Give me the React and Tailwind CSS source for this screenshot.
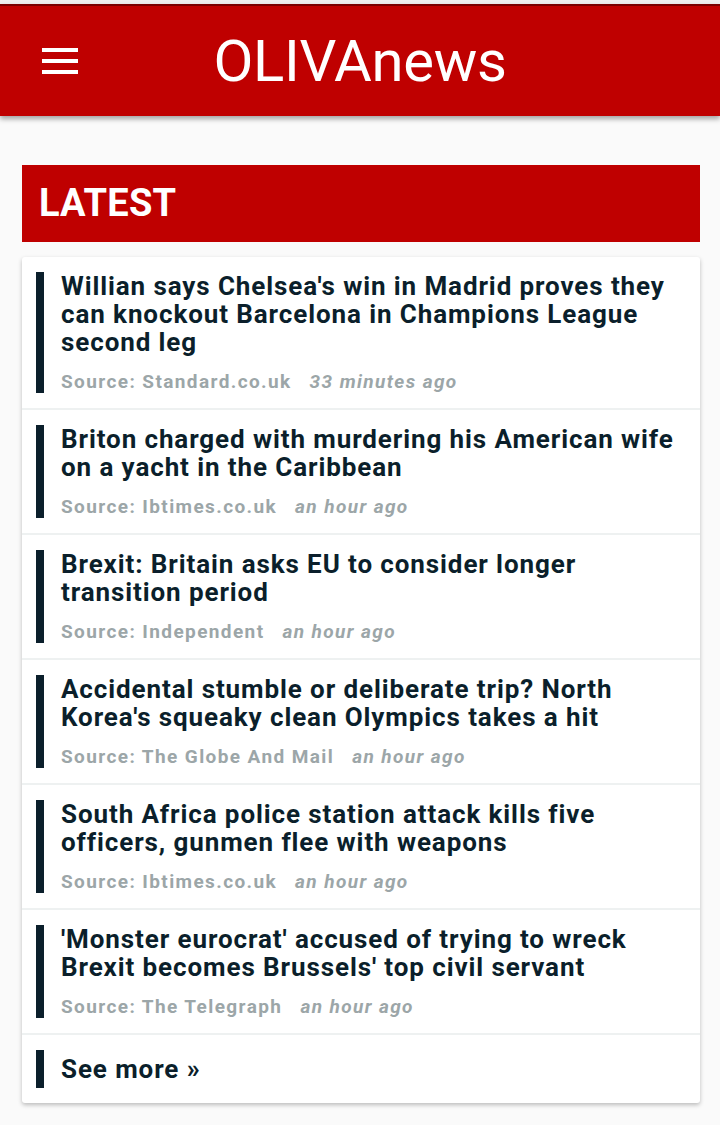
const news = [
  {
    title: "Willian says Chelsea's win in Madrid proves they can knockout Barcelona in Champions League second leg",
    source: "Standard.co.uk",
    time: "33 minutes ago",
  },
  {
    title: "Briton charged with murdering his American wife on a yacht in the Caribbean",
    source: "Ibtimes.co.uk",
    time: "an hour ago",
  },
  {
    title: "Brexit: Britain asks EU to consider longer transition period",
    source: "Independent",
    time: "an hour ago",
  },
  {
    title: "Accidental stumble or deliberate trip? North Korea's squeaky clean Olympics takes a hit",
    source: "The Globe And Mail",
    time: "an hour ago",
  },
  {
    title: "South Africa police station attack kills five officers, gunmen flee with weapons",
    source: "Ibtimes.co.uk",
    time: "an hour ago",
  },
  {
    title: "'Monster eurocrat' accused of trying to wreck Brexit becomes Brussels' top civil servant",
    source: "The Telegraph",
    time: "an hour ago",
  },
];

const NewsItem = ({ item }) => (
  <div className="border-b-2 border-[#eef1f1] px-[14px] py-[15px]">
    <div className="flex border-l-[8px] border-[#0b1f2b] pl-[17px] pr-[10px]">
      <div className="flex flex-col gap-[15px]">
        <h3 className="text-[26px] leading-[28px] font-bold text-[#0b1f2b] tracking-[0.9px]">{item.title}</h3>
        <div className="flex gap-[18px] text-[19px] leading-[22px] font-bold text-[#9ca6a8] tracking-[1.4px]">
          <span>Source: {item.source}</span>
          <span className="italic">{item.time}</span>
        </div>
      </div>
    </div>
  </div>
);

export default function App() {
  return (
    <div className="min-h-[1125px] bg-[#fafafa] pb-[20px]" style={{ fontFamily: "Roboto, 'Noto Sans', sans-serif" }}>
      <div className="h-[4px] bg-[#f0f0f0]" />
      <header className="relative flex h-[112px] items-center border-t-[2px] border-[#7a0000] bg-[#bf0000] shadow-[0_3px_5px_rgba(0,0,0,0.35)]">
        <button className="ml-[42px] flex w-[36px] flex-col gap-[7px]">
          <span className="h-[4px] w-full bg-white" />
          <span className="h-[4px] w-full bg-white" />
          <span className="h-[4px] w-full bg-white" />
        </button>
        <h1 className="pointer-events-none absolute left-0 right-0 text-center text-[58px] leading-none font-normal tracking-[-0.3px] text-white">
          OLIVAnews
        </h1>
      </header>

      <main className="ml-[22px] mr-[20px] mt-[49px]">
        <div className="flex h-[77px] items-center bg-[#bf0000] px-[17px]">
          <h2 className="text-[38px] font-bold tracking-[0.2px] text-white">LATEST</h2>
        </div>

        <div className="mt-[15px] rounded-[3px] bg-white shadow-[0_2px_4px_rgba(0,0,0,0.25)]">
          {news.map((item, i) => (
            <NewsItem key={i} item={item} />
          ))}
          <div className="px-[14px] py-[15px]">
            <div className="flex h-[38px] items-center border-l-[8px] border-[#0b1f2b] pl-[17px]">
              <span className="text-[26px] font-bold tracking-[0.9px] text-[#0b1f2b]">See more »</span>
            </div>
          </div>
        </div>
      </main>
    </div>
  );
}
